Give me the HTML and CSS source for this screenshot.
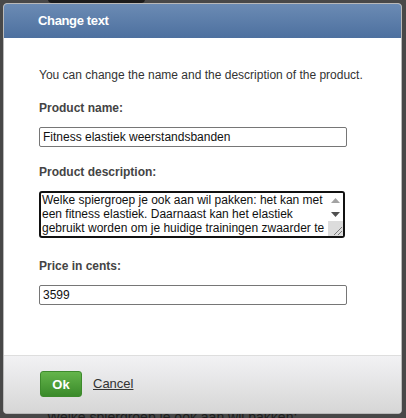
FILE: index.html
```html
<!DOCTYPE html>
<html>
<head>
<meta charset="utf-8">
<link rel="stylesheet" href="styles.css">
</head>
<body>
<div class="backdrop-blob"></div>
<div class="backdrop-text">Welke spiergroep je ook aan wil pakken:</div>
<div class="page">
  <div class="dialog">
    <div class="dialog-header">Change text</div>
    <div class="dialog-body">
      <p class="intro">You can change the name and the description of the product.</p>
      <label class="field-label">Product name:</label>
      <input class="text-input" type="text" value="Fitness elastiek weerstandsbanden">
      <label class="field-label">Product description:</label>
      <div class="area-box">
        <textarea class="text-area">Welke spiergroep je ook aan wil pakken: het kan met een fitness elastiek. Daarnaast kan het elastiek gebruikt worden om je huidige trainingen zwaarder te maken en zo meer uit je workout te halen.</textarea>
        <div class="scrollbar">
          <div class="sb-btn">
            <svg width="9" height="5" viewBox="0 0 9 5"><polygon points="0,5 9,5 4.5,0" fill="#a3a3a3"/></svg>
          </div>
          <div class="sb-btn">
            <svg width="9" height="5" viewBox="0 0 9 5"><polygon points="0,0 9,0 4.5,5" fill="#505050"/></svg>
          </div>
          <div class="sb-corner">
            <svg width="13" height="13" viewBox="0 0 13 13"><path d="M12 4 L4 12 M12 8 L8 12" stroke="#7a7a7a" stroke-width="1" fill="none"/></svg>
          </div>
        </div>
      </div>
      <label class="field-label label-price">Price in cents:</label>
      <input class="text-input" type="text" value="3599">
    </div>
    <div class="dialog-footer">
      <button class="btn-ok">Ok</button>
      <a class="cancel-link" href="#">Cancel</a>
    </div>
  </div>
</div>
</body>
</html>
```
FILE: styles.css
```css
html, body {
  margin: 0;
  padding: 0;
}
body {
  background: #484848;
  width: 406px;
  height: 418px;
  overflow: hidden;
  font-family: "Liberation Sans", Arial, sans-serif;
  position: relative;
}
.backdrop-blob {
  position: absolute;
  left: 48px;
  top: -6px;
  width: 97px;
  height: 9px;
  border-radius: 4px;
  background: #1b1b1b;
}
.backdrop-text {
  position: absolute;
  left: 47px;
  top: 409px;
  font-size: 14px;
  line-height: 16px;
  color: #1e1e1e;
  white-space: nowrap;
}
.page {
  padding: 3px 0 0 3px;
  position: relative;
}
.dialog {
  width: 397px;
  border: 1px solid #b9b9b9;
  border-radius: 4px;
  overflow: hidden;
  background: #fff;
}
.dialog-header {
  height: 34px;
  line-height: 33px;
  padding-left: 34px;
  color: #fff;
  font-weight: bold;
  font-size: 13px;
  letter-spacing: -0.35px;
  background: linear-gradient(#6b8bb4, #4d709f);
}
.dialog-body {
  padding: 29px 0 50px 35px;
  display: flex;
  flex-direction: column;
  align-items: flex-start;
}
.intro {
  margin: 0;
  font-size: 12px;
  line-height: 16px;
  color: #333;
}
.field-label {
  margin-top: 17px;
  font-size: 12px;
  line-height: 16px;
  font-weight: bold;
  color: #444;
}
.label-price {
  margin-top: 20px;
}
.text-input {
  margin-top: 11px;
  box-sizing: border-box;
  width: 308px;
  height: 20px;
  border: 1px solid #767676;
  border-radius: 2px;
  padding: 0 3px;
  font-family: "Liberation Sans", Arial, sans-serif;
  font-size: 12px;
  color: #111;
  background: #fff;
  outline: none;
}
.area-box {
  margin-top: 11px;
  box-sizing: border-box;
  width: 306px;
  height: 47px;
  border: 2px solid #111;
  border-radius: 3px;
  display: flex;
  overflow: hidden;
  background: #fff;
}
.text-area {
  flex: 1;
  min-width: 0;
  border: none;
  margin: 0;
  padding: 0 0 0 1px;
  font-family: "Liberation Sans", Arial, sans-serif;
  font-size: 12px;
  line-height: 14px;
  color: #111;
  overflow: hidden;
  resize: none;
  outline: none;
  background: transparent;
}
.scrollbar {
  width: 15px;
  display: flex;
  flex-direction: column;
  background: #fff;
}
.sb-btn {
  height: 14px;
  display: flex;
  align-items: center;
  justify-content: center;
}
.sb-corner {
  flex: 1;
  background: #dcdcdc;
  display: flex;
  align-items: flex-end;
  justify-content: flex-end;
}
.sb-corner svg {
  display: block;
}
.dialog-footer {
  border-top: 1px solid #dedede;
  height: 58px;
  box-sizing: border-box;
  padding: 15px 0 0 36px;
  display: flex;
  align-items: flex-start;
  gap: 11px;
  background: linear-gradient(#f2f2f4, #d6d6d6);
}
.btn-ok {
  width: 42px;
  height: 26px;
  border: 1px solid #3d8a2c;
  border-radius: 3px;
  background: linear-gradient(#64b54b, #3a8a2a);
  color: #fff;
  font-family: "Liberation Sans", Arial, sans-serif;
  font-weight: bold;
  font-size: 13px;
  padding: 0;
}
.cancel-link {
  font-size: 13px;
  line-height: 26px;
  color: #333;
  text-decoration: underline;
}
```
